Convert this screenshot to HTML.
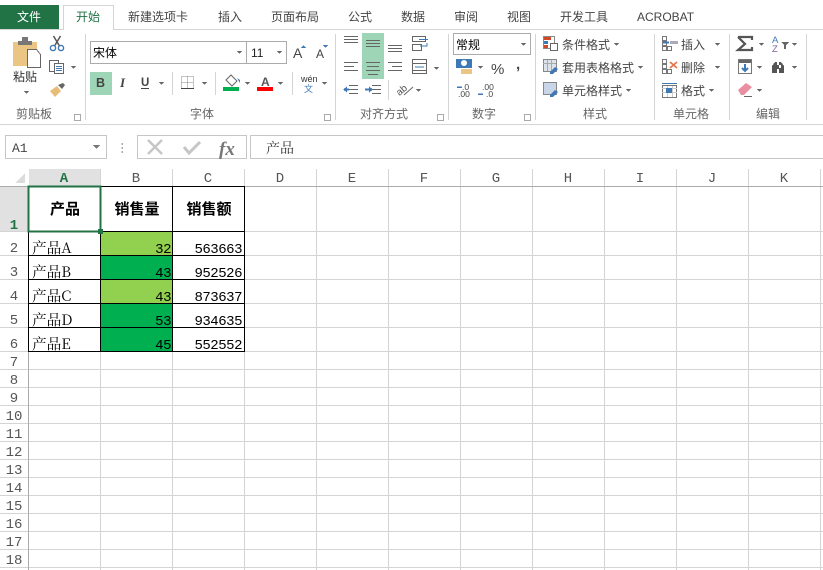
<!DOCTYPE html>
<html lang="zh"><head><meta charset="utf-8"><style>
html,body{margin:0;padding:0;background:#fff;width:823px;height:570px;overflow:hidden}
svg{display:block}
text{font-family:"Liberation Sans","Noto Sans CJK SC",sans-serif;font-size:12px;fill:#444}
.s{font-family:"Liberation Mono","WenQuanYi Zen Hei","Noto Serif CJK SC",monospace;fill:#000}
.h{font-family:"Liberation Mono",monospace;font-size:14px;fill:#555;text-anchor:middle}
.c{font-family:"Noto Serif CJK SC",serif;font-size:14.6px;fill:#000}
.n{font-family:"Liberation Mono",monospace;font-size:14px;letter-spacing:-.48px;fill:#000;text-anchor:end}
.b{font-family:"Noto Sans CJK SC",sans-serif;font-size:15px;font-weight:700;fill:#000;text-anchor:middle}
.g{fill:#666;text-anchor:middle}
.tri{fill:#666}
.a{shape-rendering:auto}
</style></head><body>
<svg width="823" height="570" viewBox="0 0 823 570" xmlns="http://www.w3.org/2000/svg" shape-rendering="crispEdges">
<rect width="823" height="570" fill="#fff"/>
<!-- tabs -->
<rect x="0" y="5" width="59" height="25" fill="#217346"/>
<text x="17" y="21" style="fill:#fff">文件</text>
<path d="M63.5 30V5.5H113.5V30" fill="#fff" stroke="#d4d4d4"/>
<path d="M0 29.5H63M113 29.5H823" stroke="#d4d4d4"/>
<text x="76" y="21" style="fill:#217346">开始</text>
<text x="128" y="21">新建选项卡</text><text x="218" y="21">插入</text><text x="271" y="21">页面布局</text><text x="348" y="21">公式</text><text x="401" y="21">数据</text><text x="454" y="21">审阅</text><text x="507" y="21">视图</text><text x="560" y="21">开发工具</text><text x="637" y="21">ACROBAT</text>
<!-- ribbon separators -->
<path d="M85.5 34V120M335.5 34V120M448.5 34V120M535.5 34V120M654.5 34V120M729.5 34V120M806.5 34V120M172.5 72V95M215.5 72V95M292.5 72V95M388.500 80V100" stroke="#d4d4d4"/>
<path d="M0 124.5H823" stroke="#d4d4d4"/>
<!-- group labels -->
<text x="34" y="118" class="g">剪贴板</text><text x="202" y="118" class="g">字体</text><text x="384" y="118" class="g">对齐方式</text><text x="484" y="118" class="g">数字</text><text x="595" y="118" class="g">样式</text><text x="691" y="118" class="g">单元格</text><text x="768" y="118" class="g">编辑</text>
<path d="M74.500 114.500h6v6h-6zM324.500 114.500h6v6h-6zM437.500 114.500h6v6h-6zM524.500 114.500h6v6h-6z" fill="none" stroke="#aaa"/>
<!-- clipboard -->
<rect x="13" y="42" width="24" height="24" fill="#eac584"/>
<rect x="18" y="41" width="14" height="4" fill="#777"/><rect x="22" y="37" width="6" height="5" fill="#777"/>
<path d="M27.5 49.5h9l4 5v13h-13z" fill="#fff" stroke="#666"/>
<text x="13" y="81" style="fill:#333">粘贴</text>
<path d="M24 91h5l-2.500 3z" class="tri"/>
<g class="a">
<path d="M53.500 36l6 10M60.500 36l-6 10" stroke="#555" stroke-width="1.500" fill="none"/>
<circle cx="53" cy="48" r="2.600" fill="none" stroke="#3f79b5" stroke-width="1.400"/><circle cx="61" cy="48" r="2.600" fill="none" stroke="#3f79b5" stroke-width="1.400"/>
<path d="M50 91l7-5 4 5-6 6z" fill="#e8bd77"/>
<path d="M58 85l5-2 2 2-3 4z" fill="#666"/>
</g>
<rect x="49.500" y="60.500" width="9" height="11" fill="#fff" stroke="#666"/><rect x="54.500" y="63.500" width="9" height="10" fill="#fff" stroke="#666"/><path d="M56 66.500h6M56 68.500h6M56 70.500h6" stroke="#3f79b5"/>
<path d="M71 66h5l-2.500 3z" class="tri"/>
<!-- font -->
<rect x="90.500" y="41.500" width="156" height="22" fill="#fff" stroke="#ababab"/><rect x="246.500" y="41.500" width="40" height="22" fill="#fff" stroke="#ababab"/>
<text x="93" y="57" style="fill:#000">宋体</text><text x="251" y="57" style="fill:#222">11</text>
<path d="M237 51h5l-2.500 3zM277 51h5l-2.500 3z" class="tri"/>
<text x="293" y="58" style="font-size:14px">A</text><text x="316" y="58" style="font-size:12px">A</text>
<path d="M301 48l2.500-3 2.500 3zM323 45h5l-2.500 3z" fill="#3f79b5"/>
<rect x="90" y="72" width="22" height="23" fill="#9fd5b7"/>
<text x="96" y="87" style="font-weight:700;font-size:12.500px">B</text>
<text x="120" y="87" style="font-style:italic;font-family:'Liberation Serif';font-weight:700;font-size:13px">I</text>
<text x="141" y="86" style="font-size:11.500px;font-weight:700">U</text><path d="M141 88.500h8" stroke="#444"/>
<path d="M159 82h5l-2.500 3zM202 82h5l-2.500 3zM245 82h5l-2.500 3zM278 82h5l-2.500 3z" class="tri"/>
<path d="M181.500 76.500h12v12h-12zM187.500 76.500v12M181.500 82.500h12" fill="none" stroke="#888" stroke-dasharray="1 1"/>
<path d="M181 88.500h13" stroke="#444"/>
<g class="a"><path d="M226 80l5-5 6 6-5 5z" fill="#fff" stroke="#666"/><path d="M237 78l3 2v3z" fill="#3f79b5"/></g>
<rect x="223" y="87" width="16" height="4" fill="#00b050"/>
<text x="261" y="86" style="font-weight:700;font-size:12px;fill:#555">A</text><rect x="257" y="87" width="16" height="4" fill="#f00"/>
<text x="301" y="82" style="font-size:9px;fill:#333">wén</text><text x="304" y="92" style="font-size:9px;fill:#3f79b5">文</text>
<path d="M322 82h5l-2.500 3z" class="tri"/>
<!-- alignment -->
<rect x="362" y="33" width="22" height="46" fill="#9fd5b7"/>
<path d="M344 36.500h14M344 39.500h14M344 42.500h14M366 40.500h14M366 43.500h14M366 46.500h14M388 45.500h14M388 48.500h14M388 51.500h14" stroke="#666"/>
<path d="M344 62.500h14M344 66.500h10M344 70.500h14M366 62.500h14M367 66.500h12M366 70.500h14M368 74.500h10M388 62.500h14M392 66.500h10M388 70.500h14" stroke="#666"/>
<path d="M349 85.500h9M349 89.500h9M349 93.500h9M372 85.500h9M372 89.500h9M372 93.500h9" stroke="#666"/>
<path d="M349 89.500h-5M345 89.500" stroke="#3f79b5" stroke-width="2"/><path d="M343 89.500l4-3v6z" fill="#3f79b5"/>
<path d="M365 89.500h5" stroke="#3f79b5" stroke-width="2"/><path d="M373 89.500l-4-3v6z" fill="#3f79b5"/>
<!-- wrap -->
<path d="M412.500 36.500h13v5h-13zM412.500 44.500h9v6h-9z" fill="#fff" stroke="#666"/><path d="M419 39.500h9M420 46h7v-3" stroke="#3f79b5" fill="none"/>
<!-- merge -->
<rect x="412.500" y="59.500" width="14" height="14" fill="#fff" stroke="#666"/><path d="M412 63.500h14M412 70.500h14" stroke="#666"/><path d="M415 67h9" stroke="#3f79b5"/>
<path d="M434 67h5l-2.500 3z" class="tri"/>
<g class="a"><text x="396" y="93" transform="rotate(-40 402 90)" style="font-size:10px;fill:#555">ab</text><path d="M404 95l9-8" stroke="#666" fill="none"/></g>
<path d="M416 89h5l-2.500 3z" class="tri"/>
<!-- number -->
<rect x="453.500" y="33.500" width="77" height="21" fill="#fff" stroke="#ababab"/>
<text x="456" y="49" style="fill:#000">常规</text><path d="M521 43h5l-2.500 3z" class="tri"/>
<rect x="456" y="59" width="16" height="9" fill="#3f79b5"/><circle cx="464" cy="63" r="3" fill="#fff" class="a"/><rect x="461" y="69" width="11" height="5" fill="#eac584"/>
<path d="M478 66h5l-2.500 3z" class="tri"/>
<text x="491" y="74" style="font-size:15px;fill:#444">%</text><text x="516" y="69" style="font-size:15px;font-weight:700;fill:#444">,</text>
<text x="462" y="90" style="font-size:8.500px;fill:#444">.0</text><text x="458" y="97" style="font-size:8.500px;fill:#444">.00</text><text x="482" y="90" style="font-size:8.500px;fill:#444">.00</text><text x="486" y="97" style="font-size:8.500px;fill:#444">.0</text>
<path d="M457 87h5M478 94h5" stroke="#3f79b5" stroke-width="1.500"/>
<!-- styles -->
<text x="562" y="49">条件格式</text><text x="562" y="72">套用表格格式</text><text x="562" y="95">单元格样式</text>
<path d="M614 43h5l-2.500 3zM638 66h5l-2.500 3zM626 89h5l-2.500 3z" class="tri"/>
<rect x="543.500" y="36.500" width="11" height="12" fill="#fff" stroke="#888"/><rect x="544" y="37" width="7" height="3" fill="#d24726"/><rect x="544" y="41" width="4" height="3" fill="#3f79b5"/><rect x="544" y="45" width="4" height="3" fill="#d24726"/><rect x="550.500" y="43.500" width="7" height="7" fill="#fff" stroke="#666"/>
<rect x="543.500" y="59.500" width="13" height="12" fill="#dde3ea" stroke="#888"/><path d="M543 63.500h13M547.500 60v11M551.500 60v11" stroke="#aaa"/>
<path class="a" d="M550 72l5-5 3 2-5 5h-3z" fill="#3f79b5"/>
<rect x="543.500" y="82.500" width="13" height="12" fill="#c9d6e8" stroke="#888"/>
<path class="a" d="M550 95l5-5 3 2-5 5h-3z" fill="#3f79b5"/>
<!-- cells -->
<text x="681" y="49">插入</text><text x="681" y="72">删除</text><text x="681" y="95">格式</text>
<path d="M715 43h5l-2.500 3zM715 66h5l-2.500 3zM709 89h5l-2.500 3z" class="tri"/>
<path d="M662.500 36.500h4v4h-4zM662.500 41.500h4v4h-4zM662.500 46.500h4v4h-4zM667.500 46.500h4v4h-4zM662.500 59.500h4v4h-4zM662.500 64.500h4v4h-4zM662.500 69.500h4v4h-4zM667.500 69.500h4v4h-4z" fill="none" stroke="#777"/>
<rect x="670" y="41" width="8" height="3" fill="#aab" /><path d="M663 42.500h6" stroke="#3f79b5" stroke-width="2"/><path d="M670 62l-0 0" />
<path class="a" d="M670 62l7 6M677 62l-7 6" stroke="#e8734a" stroke-width="1.700"/>
<rect x="662.500" y="85.500" width="14" height="12" fill="#fff" stroke="#777"/><path d="M662 83.500h15" stroke="#3f79b5"/><path d="M662 88.500h15M662 92.500h15M667.500 86v11M672.500 86v11" stroke="#ccc"/><rect x="666" y="88" width="6" height="5" fill="#3f79b5"/>
<!-- editing -->
<path class="a" d="M738 37h14v3M738 37l7 7-7 6h14v-3" fill="none" stroke="#555" stroke-width="2.200"/>
<path d="M759 43h5l-2.500 3zM757 66h5l-2.500 3zM757 89h5l-2.500 3zM792 43h5l-2.500 3zM792 66h5l-2.500 3z" class="tri"/>
<text x="772" y="43" style="font-size:9.500px;fill:#3f79b5">A</text><text x="772" y="52" style="font-size:9.500px;fill:#7f5aa5">Z</text><path d="M781 42h8l-3 3v4h-2v-4z" fill="#666"/>
<rect x="738.500" y="59.500" width="13" height="14" fill="#fff" stroke="#777"/><rect x="739" y="60" width="12" height="3" fill="#666"/><path class="a" d="M745 64v7M742 68l3 3 3-3" stroke="#3f79b5" stroke-width="2" fill="none"/>
<path d="M772 73v-7l3-4h2v3h2v3h-2v0h4v-3h-2v-3h2l3 4v7h-5v-4h-2v4z" fill="#555"/>
<g class="a"><path d="M738 90l8-7 6 4-8 8h-3z" fill="#ea8fa0"/></g><path d="M744 96.500h8" stroke="#666"/>
<!-- formula bar -->
<rect x="5.500" y="135.500" width="101" height="23" fill="#fff" stroke="#c6c6c6"/>
<text x="12" y="152" class="s" style="font-size:13px;fill:#444">A1</text><path d="M93 145h7l-3.500 4z" fill="#777"/>
<path d="M122 143v2M122 147v2M122 151v2" stroke="#aaa" stroke-width="1.500"/>
<rect x="137.500" y="135.500" width="109" height="23" fill="#fff" stroke="#c6c6c6"/>
<g class="a"><path d="M148 140l14 14M162 140l-14 14" stroke="#c6c6c6" stroke-width="2.500"/><path d="M184 147l5 6 11-11" stroke="#c6c6c6" stroke-width="3" fill="none"/></g>
<text x="219" y="155" style="font-family:'Liberation Serif';font-style:italic;font-weight:700;font-size:19px;fill:#777">fx</text>
<rect x="250.500" y="135.500" width="580" height="23" fill="#fff" stroke="#c6c6c6"/>
<text x="266" y="153" style="fill:#333;font-size:14px;font-family:'Noto Serif CJK SC',serif">产品</text>
<!-- headers bg -->
<rect x="29" y="169" width="72" height="17" fill="#e1e1e1"/><rect x="0" y="187" width="28" height="45" fill="#e1e1e1"/>
<path d="M25 173V183H15z" fill="#dcdcdc"/>
<!-- fills -->
<rect x="101" y="232" width="72" height="24" fill="#92d050"/><rect x="101" y="256" width="72" height="24" fill="#00b050"/><rect x="101" y="280" width="72" height="24" fill="#92d050"/><rect x="101" y="304" width="72" height="48" fill="#00b050"/>
<!-- gridlines -->
<g stroke="#d4d4d4">
<path d="M100.500 169V186M172.500 169V186M244.500 169V186M316.500 169V570M388.500 169V570M460.500 169V570M532.500 169V570M604.500 169V570M676.500 169V570M748.500 169V570M820.500 169V570"/>
<path d="M100.500 352V570M172.500 352V570M244.500 352V570M100.500 187V232M172.500 187V232"/>
<path d="M0 231.500H823M0 255.500H28M245 255.500H823M0 279.500H28M245 279.500H823M0 303.500H28M245 303.500H823M0 327.500H28M245 327.500H823M0 351.500H823M0 369.500H823M0 387.500H823M0 405.500H823M0 423.500H823M0 441.500H823M0 459.500H823M0 477.500H823M0 495.500H823M0 513.500H823M0 531.500H823M0 549.500H823M0 567.500H823"/>
</g>
<path d="M0 186.500H823" stroke="#ababab"/><path d="M28.500 187V570" stroke="#ababab"/>
<!-- table borders -->
<path d="M100.500 186V352M172.500 186V352M244.500 186V352M28.500 232V352M29 231.500H245M29 255.500H245M29 279.500H245M29 303.500H245M29 327.500H245M29 351.500H245M101 186.500H245" stroke="#000"/>
<!-- selection -->
<rect x="28" y="186" width="73" height="46" fill="#fff" stroke="none"/>
<rect x="28.500" y="186.500" width="72" height="45" fill="none" stroke="#217346" stroke-width="2"/>
<rect x="98" y="229" width="5" height="5" fill="#217346"/>
<!-- column headers -->
<text x="64" y="182" class="h" style="fill:#217346;font-weight:700">A</text>
<text x="136" y="182" class="h">B</text><text x="208" y="182" class="h">C</text><text x="280" y="182" class="h">D</text><text x="352" y="182" class="h">E</text><text x="424" y="182" class="h">F</text><text x="496" y="182" class="h">G</text><text x="568" y="182" class="h">H</text><text x="640" y="182" class="h">I</text><text x="712" y="182" class="h">J</text><text x="784" y="182" class="h">K</text>
<!-- row headers -->
<text x="14" y="229" class="h" style="fill:#217346;font-weight:700">1</text>
<text x="14" y="252" class="h">2</text><text x="14" y="276" class="h">3</text><text x="14" y="300" class="h">4</text><text x="14" y="324" class="h">5</text><text x="14" y="348" class="h">6</text><text x="14" y="366" class="h">7</text><text x="14" y="384" class="h">8</text><text x="14" y="402" class="h">9</text><text x="14" y="420" class="h">10</text><text x="14" y="438" class="h">11</text><text x="14" y="456" class="h">12</text><text x="14" y="474" class="h">13</text><text x="14" y="492" class="h">14</text><text x="14" y="510" class="h">15</text><text x="14" y="528" class="h">16</text><text x="14" y="546" class="h">17</text><text x="14" y="564" class="h">18</text>
<!-- cell text -->
<text x="65" y="214" class="b">产品</text><text x="137" y="214" class="b">销售量</text><text x="209" y="214" class="b">销售额</text>
<text x="32" y="253" class="c">产品A</text><text x="32" y="277" class="c">产品B</text><text x="32" y="301" class="c">产品C</text><text x="32" y="325" class="c">产品D</text><text x="32" y="349" class="c">产品E</text>
<text x="171" y="253" class="n">32</text><text x="171" y="277" class="n">43</text><text x="171" y="301" class="n">43</text><text x="171" y="325" class="n">53</text><text x="171" y="349" class="n">45</text>
<text x="242" y="253" class="n">563663</text><text x="242" y="277" class="n">952526</text><text x="242" y="301" class="n">873637</text><text x="242" y="325" class="n">934635</text><text x="242" y="349" class="n">552552</text>
</svg>
</body></html>
